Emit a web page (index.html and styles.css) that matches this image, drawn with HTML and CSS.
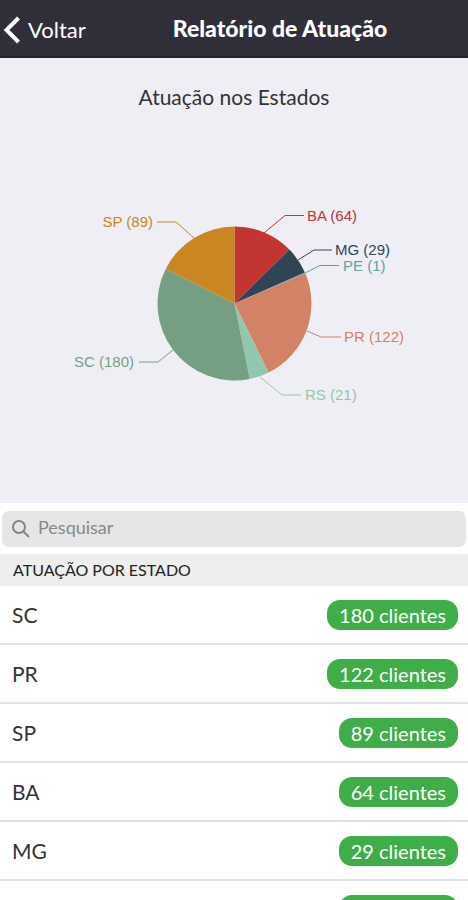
FILE: index.html
```html
<!DOCTYPE html>
<html lang="pt-BR">
<head>
    <meta charset="UTF-8">
    <meta name="viewport" content="width=device-width, initial-scale=1.0">
    <title>Relatório de Atuação</title>
    <link rel="stylesheet" href="styles.css">
</head>
<body>
    <header class="navbar">
        <a class="back" href="#">
            <svg class="back-icon" viewBox="0 0 18 28" aria-hidden="true"><path d="M15.5 2 3.5 14l12 12"/></svg>
            Voltar
        </a>
        <h1>Relatório de Atuação</h1>
    </header>

    <section class="chart">
        <h2>Atuação nos Estados</h2>
        <svg class="pie" viewBox="0 0 468 220" role="img" aria-label="Clientes por estado">
            <g>
                <path fill="#c23531" d="M234.5 113.5V36.5A77 77 0 0 1 289.4 59.6Z"/>
                <path fill="#2f4554" d="M234.5 113.5 289.4 59.6A77 77 0 0 1 304.9 82.4Z"/>
                <path fill="#61a0a8" d="M234.5 113.5 304.9 82.4A77 77 0 0 1 305.3 83.3Z"/>
                <path fill="#d48265" d="M234.5 113.5 305.3 83.3A77 77 0 0 1 268.6 182.5Z"/>
                <path fill="#91c7ae" d="M234.5 113.5 268.6 182.5A77 77 0 0 1 249.7 189Z"/>
                <path fill="#749f83" d="M234.5 113.5 249.7 189A77 77 0 0 1 165.7 78.9Z"/>
                <path fill="#ca8622" d="M234.5 113.5 165.7 78.9A77 77 0 0 1 234.5 36.5Z"/>
            </g>
            <g class="lines">
                <path stroke="#c23531" d="M264 43 285 25.5H304"/>
                <path stroke="#2f4554" d="M298 70 314 60H332"/>
                <path stroke="#61a0a8" d="M305 83 320 75.5H339"/>
                <path stroke="#d48265" d="M307 141 321 147H341"/>
                <path stroke="#91c7ae" d="M260 187 282 205H301"/>
                <path stroke="#749f83" d="M173 160 158 172H139"/>
                <path stroke="#ca8622" d="M194 48 176 32H157"/>
            </g>
            <g class="labels">
                <text x="307" y="31" fill="#c23531">BA (64)</text>
                <text x="335" y="65" fill="#2f4554">MG (29)</text>
                <text x="343" y="81" fill="#61a0a8">PE (1)</text>
                <text x="344" y="152" fill="#d48265">PR (122)</text>
                <text x="305" y="210" fill="#91c7ae">RS (21)</text>
                <text x="134" y="177" fill="#749f83" text-anchor="end">SC (180)</text>
                <text x="153" y="37" fill="#ca8622" text-anchor="end">SP (89)</text>
            </g>
        </svg>
    </section>

    <div class="search">
        <label class="search-box">
            <svg class="search-icon" viewBox="0 0 18 18" aria-hidden="true"><circle cx="7" cy="7" r="6"/><path d="m11.5 11.5 5.5 5.5"/></svg>
            <input type="search" placeholder="Pesquisar" aria-label="Pesquisar">
        </label>
    </div>

    <section class="states">
        <h3>ATUAÇÃO POR ESTADO</h3>
        <ul>
            <li>SC <span class="badge">180 clientes</span></li>
            <li>PR <span class="badge">122 clientes</span></li>
            <li>SP <span class="badge">89 clientes</span></li>
            <li>BA <span class="badge">64 clientes</span></li>
            <li>MG <span class="badge">29 clientes</span></li>
            <li>RS <span class="badge">21 clientes</span></li>
        </ul>
    </section>
</body>
</html>
```

FILE: styles.css
```css
* {
    box-sizing: border-box;
}
body {
    margin: 0;
    height: 100vh;
    display: flex;
    flex-direction: column;
    background-color: #fff;
    color: #333;
    font-family: Lato, "Open Sans", sans-serif;
}
h1, h2, h3, ul {
    margin: 0;
    padding: 0;
}
.navbar {
    flex: none;
    display: grid;
    grid-template-columns: 92px 1fr;
    align-items: center;
    height: 58px;
    background-color: #302e38;
    border-bottom: 2px solid #25222d;
    color: #fff;
}
.back {
    display: flex;
    align-items: center;
    gap: 7px;
    padding: 4px 0 0 3px;
    color: #fff;
    font-size: 22px;
    line-height: 28px;
    text-decoration: none;
}
.back-icon {
    width: 18px;
    height: 28px;
    fill: none;
    stroke: #fff;
    stroke-width: 4;
}
h1 {
    font-size: 23px;
    line-height: 28px;
    font-weight: 900;
    text-align: center;
}
.chart {
    flex: none;
    padding: 25px 0 93px;
    background-color: #efeef4;
}
h2 {
    margin-bottom: 79px;
    font-size: 21px;
    line-height: 28px;
    font-weight: 400;
    text-align: center;
}
.pie {
    display: block;
    width: 100%;
}
.lines {
    fill: none;
    stroke-width: 1;
}
.labels {
    font-family: "Liberation Sans", Arial, sans-serif;
    font-size: 15px;
}
.search {
    flex: none;
    padding: 8px 2px 7px;
}
.search-box {
    display: flex;
    align-items: center;
    gap: 8px;
    height: 36px;
    padding: 0 10px;
    background-color: #e6e6e6;
    border-radius: 7px;
}
.search-icon {
    width: 18px;
    height: 18px;
    fill: none;
    stroke: #858585;
    stroke-width: 2;
}
.search-box input {
    flex: 1;
    min-width: 0;
    height: 32px;
    padding: 0 0 4px;
    border: none;
    outline: none;
    background: none;
    color: #333;
    font-family: inherit;
    font-size: 18px;
}
.search-box input::placeholder {
    color: #888;
}
.states {
    flex: 1;
    min-height: 0;
    overflow-y: auto;
    scrollbar-width: none;
}
h3 {
    padding: 0 13px;
    background-color: #eee;
    color: #222;
    font-size: 16px;
    line-height: 32px;
    font-weight: 400;
}
ul {
    list-style: none;
}
li {
    display: flex;
    align-items: center;
    justify-content: space-between;
    height: 59px;
    padding: 0 10px 0 12px;
    border-bottom: 2px solid #e2e2e4;
    font-size: 21px;
}
.badge {
    padding: 0 12px;
    background-color: #3fae49;
    border-radius: 13px;
    color: #fff;
    font-size: 20px;
    line-height: 30px;
}
```
